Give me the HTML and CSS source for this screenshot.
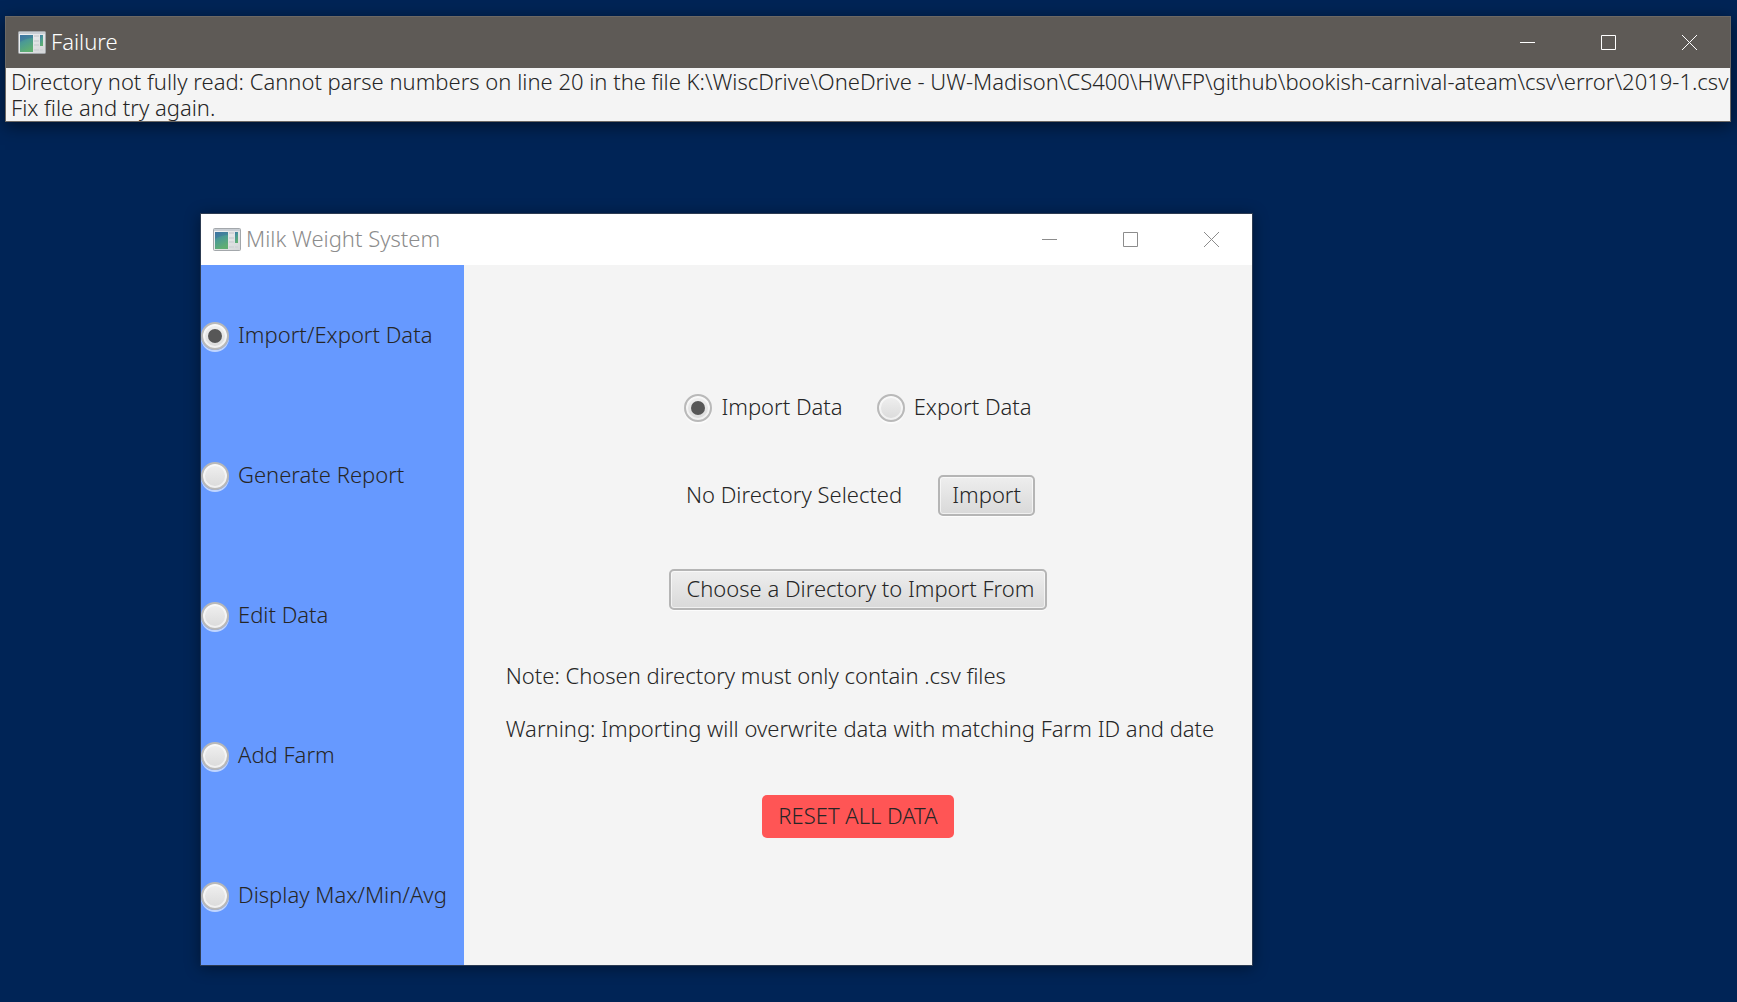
FILE: index.html
```html
<!DOCTYPE html>
<html lang="en">
<head>
<meta charset="utf-8">
<title>Milk Weight System</title>
<link rel="stylesheet" href="styles.css">
</head>
<body>
<svg width="0" height="0" class="defs" aria-hidden="true">
  <defs>
    <linearGradient id="pane" x1="0" y1="0" x2="0.4" y2="1">
      <stop offset="0" stop-color="#3f78a6"/>
      <stop offset="0.5" stop-color="#4c9c92"/>
      <stop offset="1" stop-color="#5fae72"/>
    </linearGradient>
    <linearGradient id="frame" x1="0" y1="0" x2="1" y2="1">
      <stop offset="0" stop-color="#f4f5f6"/>
      <stop offset="1" stop-color="#d4d6d8"/>
    </linearGradient>
    <symbol id="app" viewBox="0 0 28 23">
      <rect x="0.5" y="0.5" width="27" height="22" rx="1" fill="url(#frame)" stroke="#a3a7ab"/>
      <rect x="1" y="1" width="26" height="2" fill="#c9ced4"/>
      <rect x="2" y="4" width="13" height="17" fill="url(#pane)"/>
      <path d="M2 11Q8 7 15 7V4H2Z" fill="#3c6f9f" opacity="0.45"/>
      <path d="M16 5h5M16 10h5M16 14h5M16 19h5" stroke="#d2d5d8" stroke-width="2"/>
      <rect x="22" y="4" width="3" height="11" fill="url(#pane)"/>
      <path d="M22 19h3" stroke="#d2d5d8" stroke-width="2"/>
    </symbol>
  </defs>
</svg>

<main class="desktop">
  <section class="window failure">
    <header class="titlebar">
      <svg class="app-icon" aria-hidden="true"><use href="#app"/></svg>
      <h1 class="title">Failure</h1>
      <button class="control" aria-label="Minimize"><svg viewBox="0 0 15 15"><path d="M0 7.5h15"/></svg></button>
      <button class="control" aria-label="Maximize"><svg viewBox="0 0 15 15"><path d="M.5.5h14v14H.5z"/></svg></button>
      <button class="control" aria-label="Close"><svg viewBox="0 0 15 15"><path d="M0 0l15 15M15 0L0 15"/></svg></button>
    </header>
    <p class="message">Directory not fully read: Cannot parse numbers on line 20 in the file K:\WiscDrive\OneDrive - UW-Madison\CS400\HW\FP\github\bookish-carnival-ateam\csv\error\2019-1.csv<br>Fix file and try again.</p>
  </section>

  <section class="window system">
    <header class="titlebar">
      <svg class="app-icon" aria-hidden="true"><use href="#app"/></svg>
      <h1 class="title">Milk Weight System</h1>
      <button class="control" aria-label="Minimize"><svg viewBox="0 0 15 15"><path d="M0 7.5h15"/></svg></button>
      <button class="control" aria-label="Maximize"><svg viewBox="0 0 15 15"><path d="M.5.5h14v14H.5z"/></svg></button>
      <button class="control" aria-label="Close"><svg viewBox="0 0 15 15"><path d="M0 0l15 15M15 0L0 15"/></svg></button>
    </header>
    <div class="body">
      <nav class="sidebar">
        <label class="option"><input type="radio" name="view" checked>Import/Export Data</label>
        <label class="option"><input type="radio" name="view">Generate Report</label>
        <label class="option"><input type="radio" name="view">Edit Data</label>
        <label class="option"><input type="radio" name="view">Add Farm</label>
        <label class="option"><input type="radio" name="view">Display Max/Min/Avg</label>
      </nav>
      <div class="content">
        <div class="row modes">
          <label class="option"><input type="radio" name="mode" checked>Import Data</label>
          <label class="option"><input type="radio" name="mode">Export Data</label>
        </div>
        <div class="row directory">
          <span class="status">No Directory Selected</span>
          <button class="button">Import</button>
        </div>
        <button class="button choose">Choose a Directory to Import From</button>
        <div class="notes">
          <p>Note: Chosen directory must only contain .csv files</p>
          <p>Warning: Importing will overwrite data with matching Farm ID and date</p>
        </div>
        <button class="reset">RESET ALL DATA</button>
      </div>
    </div>
  </section>
</main>
</body>
</html>
```
FILE: styles.css
```css
* { box-sizing: border-box; }

body {
  margin: 0;
  background: #002456;
  color: #262626;
  font: 300 22px/26px "Noto Sans", "Open Sans", sans-serif;
}

button, input { font: inherit; color: inherit; margin: 0; }
p, h1 { margin: 0; }
.defs { position: absolute; }

.desktop {
  position: relative;
  min-height: 100vh;
}

.window {
  position: absolute;
  background: #f4f4f4;
  white-space: nowrap;
}

.failure {
  left: 5px;
  right: 6px;
  top: 16px;
  border: 1px solid #6c6864;
  box-shadow: 0 4px 16px rgba(0, 0, 0, 0.5);
}

.system {
  left: 200px;
  top: 213px;
  width: 1053px;
  border: 1px solid #2c3b52;
  box-shadow: 0 2px 14px rgba(0, 0, 0, 0.4);
}

.titlebar {
  display: flex;
  align-items: center;
  height: 51px;
  padding-left: 12px;
  background: #fff;
  color: #8c8c8c;
}

.failure .titlebar { background: #5e5a56; color: #fff; }

.app-icon { width: 28px; height: 23px; }

.title {
  flex: 1;
  margin-left: 5px;
  padding-bottom: 4px;
  font: inherit;
}

.control {
  display: grid;
  place-items: center;
  width: 81px;
  height: 51px;
  padding: 0;
  border: 0;
  background: none;
}

.control svg {
  width: 15px;
  height: 15px;
  fill: none;
  stroke: currentColor;
}

.message { padding: 0 0 1px 5px; }

.body {
  display: grid;
  grid-template-columns: 263px 1fr;
  min-height: 700px;
}

.sidebar {
  display: grid;
  grid-auto-rows: 1fr;
  align-items: center;
  background: #6699ff;
}

.sidebar .option { padding-bottom: 2px; }

.option {
  display: flex;
  align-items: center;
  gap: 9px;
}

.option input {
  appearance: none;
  display: grid;
  place-items: center;
  width: 28px;
  height: 28px;
  margin-top: 4px;
  border: 2px solid #b9b9b9;
  border-radius: 50%;
  background: linear-gradient(#f0f0f0, #dadada);
  box-shadow: inset 0 0 0 2px rgba(255, 255, 255, 0.6), 0 2px 0 rgba(255, 255, 255, 0.6);
}

.option input:checked::before {
  content: "";
  width: 14px;
  height: 14px;
  border-radius: 50%;
  background: #575757;
}

.content {
  display: flex;
  flex-direction: column;
  align-items: center;
  padding-top: 125px;
}

.row {
  display: flex;
  align-items: center;
  gap: 36px;
  margin-bottom: 53px;
}

.modes { gap: 34px; }
.directory { padding-left: 5px; }
.status { padding-bottom: 4px; }

.button {
  height: 41px;
  padding: 0 12px 4px;
  border: 2px solid #b5b5b5;
  border-radius: 5px;
  background: linear-gradient(#eeeeee, #d9d9d9);
  box-shadow: inset 0 0 0 1px rgba(255, 255, 255, 0.6), 0 1px 0 #fcfcfc;
}

.choose { padding-left: 16px; padding-right: 11px; }

.notes {
  display: grid;
  gap: 27px;
  margin-top: 52px;
  padding-left: 4px;
}

.reset {
  height: 43px;
  margin-top: 54px;
  padding: 0 16px 4px;
  border: 0;
  border-radius: 5px;
  background: #ff5555;
}
```
